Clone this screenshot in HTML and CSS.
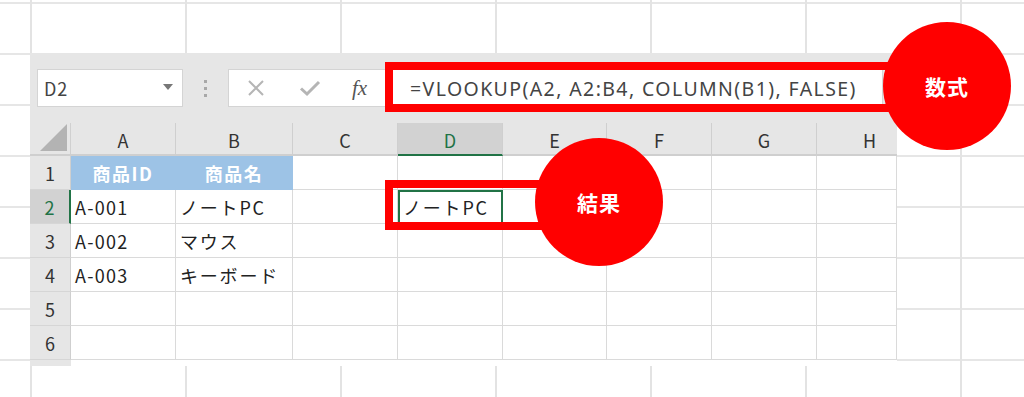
FILE: index.html
```html
<!DOCTYPE html>
<html lang="ja">
<head>
<meta charset="utf-8">
<link rel="stylesheet" href="styles.css">
</head>
<body>
<div class="page">
  <div class="excel">
    <div class="toolbar">
      <div class="namebox">
        <span class="name">D2</span>
        <svg class="caret" width="12" height="8" viewBox="0 0 12 8"><path d="M1 1h10L6 7z" fill="#777"/></svg>
      </div>
      <div class="dots"><i></i><i></i><i></i></div>
      <div class="fbar">
        <div class="ficons">
          <svg width="20" height="20" viewBox="0 0 20 20"><path d="M3 3L17 17M17 3L3 17" stroke="#b5b5b5" stroke-width="2" fill="none"/></svg>
          <svg width="22" height="20" viewBox="0 0 22 20"><path d="M2 10.5L8 16L20 4" stroke="#b5b5b5" stroke-width="3" fill="none"/></svg>
          <span class="fx">fx</span>
        </div>
        <div class="formula">=VLOOKUP(A2, A2:B4, COLUMN(B1), FALSE)</div>
      </div>
    </div>
    <div class="grid">
      <div class="corner"><span class="tri"></span></div>
      <div class="ch">A</div>
      <div class="ch">B</div>
      <div class="ch">C</div>
      <div class="ch sel">D</div>
      <div class="ch">E</div>
      <div class="ch">F</div>
      <div class="ch">G</div>
      <div class="ch last">H</div>

      <div class="rh">1</div>
      <div class="c head">商品ID</div>
      <div class="c head">商品名</div>
      <div class="c"></div><div class="c"></div><div class="c"></div><div class="c"></div><div class="c"></div><div class="c"></div>

      <div class="rh sel">2</div>
      <div class="c">A-001</div>
      <div class="c jp">ノートPC</div>
      <div class="c"></div><div class="c active jp">ノートPC</div><div class="c"></div><div class="c"></div><div class="c"></div><div class="c"></div>

      <div class="rh">3</div>
      <div class="c">A-002</div>
      <div class="c jp">マウス</div>
      <div class="c"></div><div class="c"></div><div class="c"></div><div class="c"></div><div class="c"></div><div class="c"></div>

      <div class="rh">4</div>
      <div class="c">A-003</div>
      <div class="c jp">キーボード</div>
      <div class="c"></div><div class="c"></div><div class="c"></div><div class="c"></div><div class="c"></div><div class="c"></div>

      <div class="rh">5</div>
      <div class="c"></div><div class="c"></div><div class="c"></div><div class="c"></div><div class="c"></div><div class="c"></div><div class="c"></div><div class="c"></div>

      <div class="rh">6</div>
      <div class="c"></div><div class="c"></div><div class="c"></div><div class="c"></div><div class="c"></div><div class="c"></div><div class="c"></div><div class="c"></div>
    </div>
    <div class="foot"></div>
  </div>

  <div class="mark mark-formula"></div>
  <div class="mark mark-result"></div>
  <div class="badge badge-formula">数式</div>
  <div class="badge badge-result">結果</div>
</div>
</body>
</html>
```

FILE: styles.css
```css
* { box-sizing: border-box; }
html, body { margin: 0; padding: 0; }
body {
  width: 1024px;
  height: 397px;
  overflow: hidden;
  background-color: #fff;
  background-image:
    linear-gradient(to right, #e3e3e3 0, #e3e3e3 2px, transparent 2px),
    linear-gradient(to bottom, #e6e6e6 0, #e6e6e6 2px, transparent 2px);
  background-size: 155px 397px, 1024px 51px;
  background-position: 30px 0, 0 2px;
  font-family: "Noto Sans CJK JP", "Noto Sans", sans-serif;
}
.page { position: relative; width: 1024px; height: 397px; padding: 53px 0 0 30px; }

.excel { width: 867px; background: #e6e6e6; }

.toolbar { height: 70px; display: flex; align-items: flex-start; padding: 16px 0 0 7px; }
.namebox {
  width: 146px; height: 38px; background: #fff; border: 1px solid #d4d4d4;
  display: flex; align-items: center; justify-content: space-between; padding: 0 8px 0 6px;
}
.name { font-size: 18px; color: #444; letter-spacing: 0.8px; }
.caret { margin-top: -2px; }
.dots { width: 45px; height: 38px; display: flex; flex-direction: column; align-items: center; justify-content: center; gap: 4px; }
.dots i { width: 3px; height: 3px; background: #a8a8a8; display: block; }
.fbar {
  flex: 1; height: 38px; margin-right: 14px; background: #fff; border: 1px solid #d4d4d4;
  display: flex; align-items: center;
}
.ficons { width: 157px; display: flex; align-items: center; padding-left: 17px; gap: 33px; }
.fx { font-family: "Liberation Serif", serif; font-style: italic; font-size: 21px; color: #555; margin-left: -2px; }
.formula { padding-left: 24px; font-family: "Noto Sans", sans-serif; font-size: 19.5px; color: #444; letter-spacing: 1.4px; white-space: nowrap; }

.grid {
  display: grid;
  grid-template-columns: 41px 105px 117px 105px 105px 104px 105px 105px 80px;
  grid-template-rows: 33px repeat(6, 34px);
  background: #fff;
}
.corner { background: #e6e6e6; border-right: 1px solid #d0d0d0; border-bottom: 2px solid #cfcfcf; position: relative; }
.tri {
  position: absolute; right: 3px; bottom: 3px; width: 0; height: 0;
  border-left: 27px solid transparent; border-bottom: 27px solid #b3b3b3;
}
.ch {
  background: #e6e6e6; border-right: 1px solid #cfcfcf; border-bottom: 2px solid #cfcfcf;
  display: flex; align-items: center; justify-content: center; font-size: 18px; color: #333; padding-top: 2px;
}
.ch.last { justify-content: flex-start; padding-left: 46px; border-right: none; }
.ch.sel { background: #d2d2d2; color: #217346; border-bottom: 2px solid #217346; }
.rh {
  background: #e6e6e6; border-right: 1px solid #cfcfcf; border-bottom: 1px solid #d6d6d6;
  display: flex; align-items: center; justify-content: center; font-size: 18px; color: #333;
}
.rh.sel { background: #d2d2d2; color: #217346; border-right: 2px solid #217346; }
.c {
  border-right: 1px solid #dadada; border-bottom: 1px solid #dadada;
  display: flex; align-items: center; padding-left: 4px; font-size: 18px; color: #222; white-space: nowrap;
  letter-spacing: 1.3px;
}
.c.jp { letter-spacing: 1.8px; }
.c.head { background: #9dc3e6; color: #fff; font-weight: 700; justify-content: center; padding-left: 0; border-color: #9dc3e6; letter-spacing: 1.5px; }
.c.active { border: 2px solid #217346; padding-left: 3px; }
.foot { height: 6px; background: #fff; border-left: 41px solid #e6e6e6; }

.mark { position: absolute; border: 8px solid #ff0000; }
.mark-formula { left: 385px; top: 62px; width: 520px; height: 50px; }
.mark-result { left: 385px; top: 180px; width: 180px; height: 50px; }

.badge {
  position: absolute; width: 128px; height: 128px; border-radius: 50%;
  background: #ff0000; color: #fff; font-weight: 700; font-size: 21px;
  display: flex; align-items: center; justify-content: center; letter-spacing: 1px;
}
.badge-formula { left: 883px; top: 22px; }
.badge-result { left: 535px; top: 138px; }
```
